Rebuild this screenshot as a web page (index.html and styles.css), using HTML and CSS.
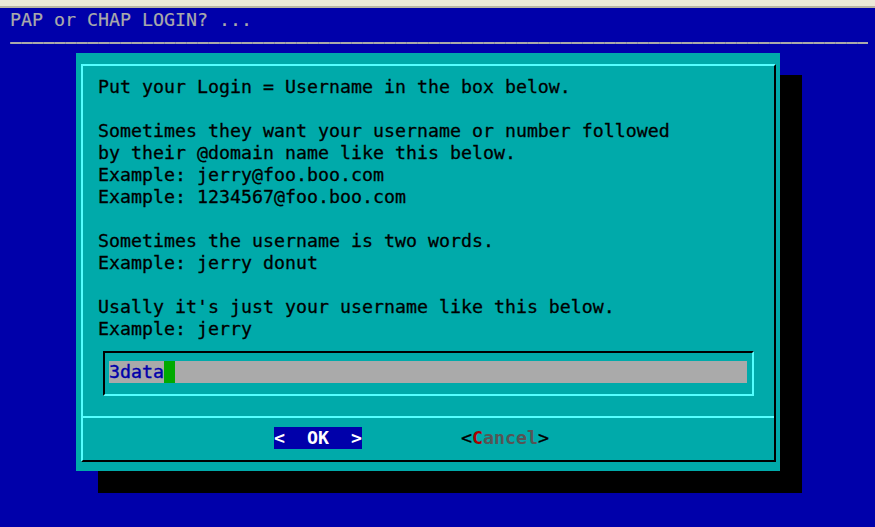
FILE: index.html
```html
<!DOCTYPE html>
<html>
<head>
<meta charset="utf-8">
<link rel="stylesheet" href="styles.css">
</head>
<body>
<div class="winstrip"></div>
<div class="backtitle">PAP or CHAP LOGIN? ...</div>
<div class="rule"></div>
<div class="dialog">
  <div class="frame">
    <div class="content">
      <div class="msg">Put your Login = Username in the box below.

Sometimes they want your username or number followed
by their @domain name like this below.
Example: jerry@foo.boo.com
Example: 1234567@foo.boo.com

Sometimes the username is two words.
Example: jerry donut

Usally it's just your username like this below.
Example: jerry</div>
      <div class="inputbox">
        <div class="field"><span class="value">3data</span><span class="cursor"></span></div>
      </div>
    </div>
    <div class="buttons">
      <span class="btn btn-active">&lt;  OK  &gt;</span>
      <span class="btn btn-inactive"><span class="br">&lt;</span><span class="hot">C</span><span class="lbl">ancel</span><span class="br">&gt;</span></span>
    </div>
  </div>
</div>
</body>
</html>
```

FILE: styles.css
```css
html, body {
  margin: 0;
  padding: 0;
}
body {
  background: #0000aa;
  width: 875px;
  height: 527px;
  overflow: hidden;
  font-family: "DejaVu Sans Mono", "Liberation Mono", monospace;
  font-size: 18.27px;
  line-height: 22px;
  color: #000;
}
.winstrip {
  height: 6px;
  background: #ece9d8;
  border-bottom: 2px solid #b9b5a4;
}
.backtitle {
  margin-top: 1px;
  padding-left: 10px;
  height: 22px;
  color: #aaaaaa;
  white-space: pre;
  -webkit-text-stroke: 0.2px #aaaaaa;
}
.rule {
  margin: 11px 7px 0 10px;
  height: 2px;
  background:
    repeating-linear-gradient(90deg, #8e8ea8 0 1px, transparent 1px 11px),
    #aaaaaa;
}
.dialog {
  margin: 9px 0 0 76px;
  width: 704px;
  height: 418px;
  box-sizing: border-box;
  padding: 11px 4px 9px 5px;
  background: #00aaaa;
  box-shadow: 22px 22px 0 #000;
}
.frame {
  height: 398px;
  box-sizing: border-box;
  border: 2px solid;
  border-color: #55ffff #000 #000 #55ffff;
  display: flex;
  flex-direction: column;
}
.content {
  padding: 10px 0 20px 0;
  display: flex;
  flex-direction: column;
}
.msg {
  padding-left: 15px;
  white-space: pre;
  height: 264px;
  -webkit-text-stroke: 0.3px #000;
}
.inputbox {
  margin: 11px 0 0 20px;
  width: 651px;
  height: 45px;
  box-sizing: border-box;
  border: 2px solid;
  border-color: #000 #55ffff #55ffff #000;
  padding: 8px 5px 0 4px;
}
.field {
  height: 22px;
  background: #aaaaaa;
  display: flex;
  white-space: pre;
}
.value {
  color: #0000aa;
  -webkit-text-stroke: 0.4px #0000aa;
}
.cursor {
  width: 11px;
  height: 22px;
  background: #00aa00;
}
.buttons {
  border-top: 2px solid #55ffff;
  padding: 9px 0 0 191px;
  display: flex;
  gap: 99px;
  height: 22px;
}
.btn {
  white-space: pre;
  height: 22px;
}
.btn-active {
  background: #0000aa;
  color: #ffffff;
  font-weight: bold;
}
.btn-inactive .br {
  color: #000;
  -webkit-text-stroke: 0.3px #000;
}
.btn-inactive .hot {
  color: #aa0000;
  font-weight: bold;
}
.btn-inactive .lbl {
  color: #555555;
  font-weight: bold;
}
```
